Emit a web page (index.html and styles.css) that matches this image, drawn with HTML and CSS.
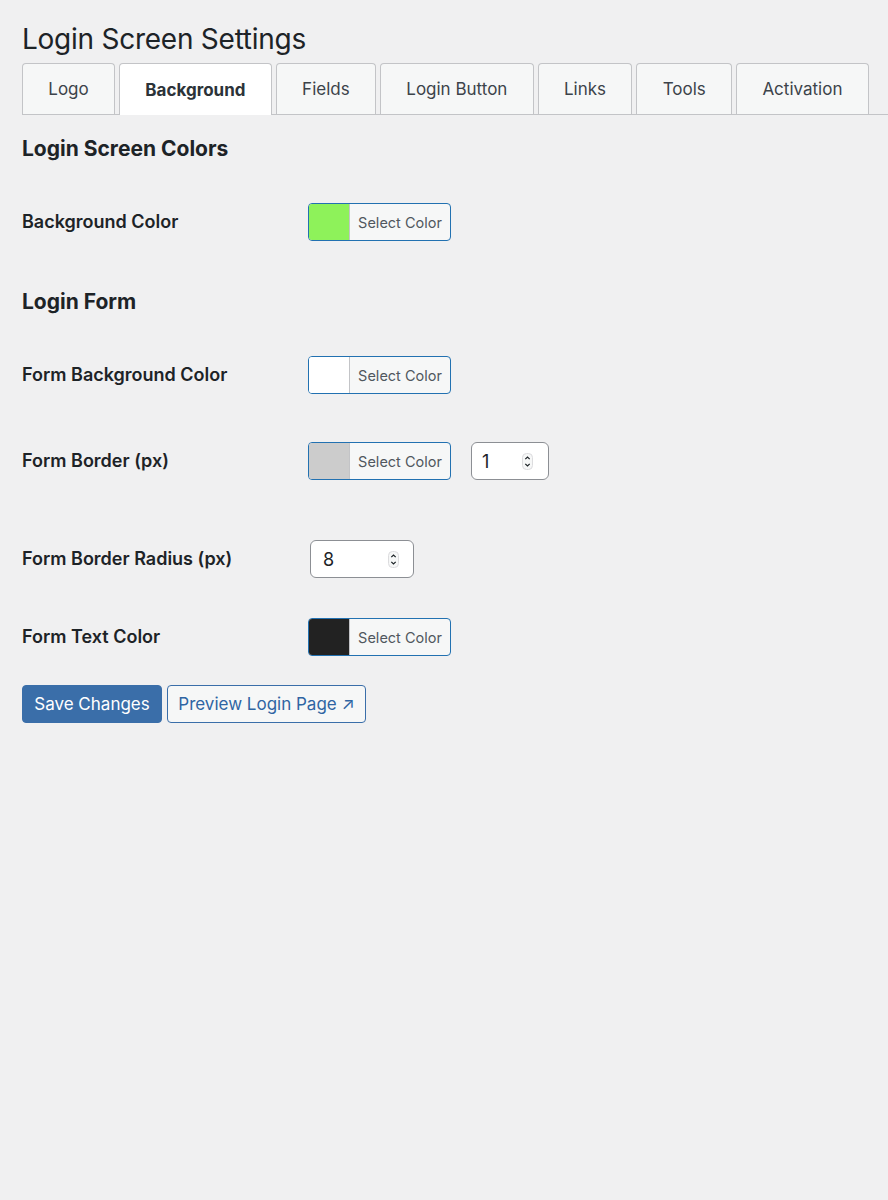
FILE: index.html
```html
<!DOCTYPE html>
<html>
<head>
<meta charset="utf-8">
<title>Login Screen Settings</title>
<link rel="stylesheet" href="styles.css">
</head>
<body>
<div class="wrap">
  <h1 class="page-title">Login Screen Settings</h1>
  <nav class="tabs">
    <a class="tab">Logo</a>
    <a class="tab tab-active">Background</a>
    <a class="tab">Fields</a>
    <a class="tab">Login Button</a>
    <a class="tab">Links</a>
    <a class="tab">Tools</a>
    <a class="tab">Activation</a>
  </nav>

  <h2 class="section-title section-first">Login Screen Colors</h2>
  <div class="row row-1">
    <div class="label">Background Color</div>
    <div class="controls">
      <button class="color-btn"><span class="swatch swatch-green"></span><span class="color-text">Select Color</span></button>
    </div>
  </div>

  <h2 class="section-title section-second">Login Form</h2>
  <div class="row row-2">
    <div class="label">Form Background Color</div>
    <div class="controls">
      <button class="color-btn"><span class="swatch swatch-white"></span><span class="color-text">Select Color</span></button>
    </div>
  </div>
  <div class="row row-3">
    <div class="label">Form Border (px)</div>
    <div class="controls">
      <button class="color-btn"><span class="swatch swatch-grey"></span><span class="color-text">Select Color</span></button>
      <div class="num num-small"><span class="num-val">1</span><span class="spin"><svg width="11" height="17" viewBox="0 0 11 17"><rect x="0.5" y="0.5" width="10" height="16" rx="4" fill="#f6f7f7" stroke="#dcdcde"/><path d="M3.3 6.2 L5.5 4 L7.7 6.2" fill="none" stroke="#1d2327" stroke-width="1.2"/><path d="M3.3 10.8 L5.5 13 L7.7 10.8" fill="none" stroke="#1d2327" stroke-width="1.2"/></svg></span></div>
    </div>
  </div>
  <div class="row row-4">
    <div class="label">Form Border Radius (px)</div>
    <div class="controls">
      <div class="num num-wide"><span class="num-val">8</span><span class="spin"><svg width="11" height="17" viewBox="0 0 11 17"><rect x="0.5" y="0.5" width="10" height="16" rx="4" fill="#f6f7f7" stroke="#dcdcde"/><path d="M3.3 6.2 L5.5 4 L7.7 6.2" fill="none" stroke="#1d2327" stroke-width="1.2"/><path d="M3.3 10.8 L5.5 13 L7.7 10.8" fill="none" stroke="#1d2327" stroke-width="1.2"/></svg></span></div>
    </div>
  </div>
  <div class="row row-5">
    <div class="label">Form Text Color</div>
    <div class="controls">
      <button class="color-btn"><span class="swatch swatch-dark"></span><span class="color-text">Select Color</span></button>
    </div>
  </div>

  <div class="actions">
    <button class="btn btn-primary">Save Changes</button>
    <button class="btn btn-secondary">Preview Login Page ↗</button>
  </div>
</div>
</body>
</html>
```

FILE: styles.css
```css
html, body {
  margin: 0;
  padding: 0;
  background: #f0f0f1;
}
body {
  font-family: Inter, "Noto Sans", "Liberation Sans", sans-serif;
  color: #1d2327;
}
.wrap {
  padding: 20px 0 0 22px;
}
.page-title {
  margin: 0;
  font-size: 28px;
  font-weight: 400;
  line-height: 38px;
  letter-spacing: -0.25px;
  color: #1d2327;
}
.tabs {
  display: flex;
  gap: 4px;
  margin-top: 5px;
  border-bottom: 1px solid #c3c4c7;
  height: 51px;
}
.tab {
  display: flex;
  align-items: center;
  box-sizing: border-box;
  height: 51px;
  padding: 0 25.3px;
  border: 1px solid #c3c4c7;
  border-bottom: none;
  border-radius: 4px 4px 0 0;
  background: #f6f7f7;
  color: #3c434a;
  font-size: 17px;
  font-weight: 400;
  text-decoration: none;
  white-space: nowrap;
}
.tab-active {
  background: #fff;
  height: 52px;
  font-weight: 700;
  color: #2c3338;
}
.section-title {
  margin: 0;
  font-size: 21px;
  font-weight: 700;
  line-height: 30px;
  color: #1d2327;
}
.section-first { margin-top: 19px; }
.section-second { margin-top: 46px; }
.row {
  display: flex;
  align-items: center;
  height: 38px;
}
.row-1 { margin-top: 39px; }
.row-2 { margin-top: 39px; }
.row-3 { margin-top: 48px; }
.row-4 { margin-top: 60px; }
.row-5 { margin-top: 40px; }
.label {
  width: 286px;
  font-size: 18px;
  font-weight: 600;
  color: #1d2327;
  margin-top: -1px;
}
.controls {
  display: flex;
  align-items: center;
  gap: 20px;
}
.color-btn {
  display: flex;
  box-sizing: border-box;
  width: 143px;
  height: 38px;
  padding: 0;
  border: 1px solid #2271b1;
  border-radius: 4px;
  overflow: hidden;
  background: #f6f7f7;
  font-family: inherit;
  cursor: pointer;
}
.swatch {
  width: 40px;
  height: 100%;
  border-right: 1px solid #c3c4c7;
}
.swatch-green { background: #8ef25a; }
.swatch-white { background: #ffffff; }
.swatch-grey { background: #cccccc; }
.swatch-dark { background: #222222; }
.color-text {
  flex: 1;
  display: flex;
  align-items: center;
  justify-content: center;
  font-size: 14.5px;
  color: #50575e;
  white-space: nowrap;
}
.num {
  display: flex;
  align-items: center;
  justify-content: space-between;
  box-sizing: border-box;
  height: 38px;
  padding: 0 15px 0 10px;
  border: 1px solid #8c8f94;
  border-radius: 6px;
  background: #fff;
}
.num-small { width: 78px; }
.num-wide { width: 104px; margin-left: 2px; padding-left: 12px; padding-right: 14px; }
.num-val {
  font-size: 18px;
  color: #1d2327;
}
.spin {
  display: flex;
}
.actions {
  display: flex;
  gap: 5px;
  margin-top: 29px;
}
.btn {
  box-sizing: border-box;
  height: 38px;
  border-radius: 4px;
  font-family: inherit;
  font-size: 17px;
  padding: 0;
  white-space: nowrap;
  cursor: pointer;
}
.btn-primary {
  width: 140px;
  background: #3a6ea9;
  border: 1px solid #3a6ea9;
  color: #fff;
}
.btn-secondary {
  width: 199px;
  background: #f6f7f7;
  border: 1px solid #3a6ea9;
  color: #2f65a3;
}
```
